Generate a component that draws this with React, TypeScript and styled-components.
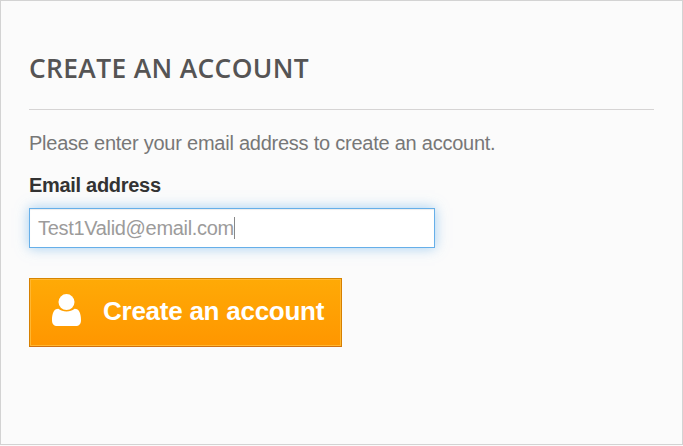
import React from "react";
import { createGlobalStyle, styled } from "styled-components";

const GlobalStyle = createGlobalStyle`
  *, *::before, *::after { box-sizing: border-box; }
  body { margin: 0; background: #fbfbfb; font-family: "Liberation Sans", Arial, sans-serif; }
`;

const Panel = styled.form`
  width: 683px;
  height: 445px;
  padding: 49px 28px 0;
  background: #fbfbfb;
  border: 1px solid #d3d3d3;
`;

const Heading = styled.h3`
  margin: 0 0 23px;
  height: 60px;
  border-bottom: 1px solid #d6d4d4;
  color: #555454;
  font: 600 26.4px/36px "Open Sans", sans-serif;
  letter-spacing: 0.35px;
  white-space: nowrap;
`;

const Intro = styled.p`
  margin: 0;
  color: #777;
  font-size: 20px;
  line-height: 20px;
  letter-spacing: -0.24px;
  white-space: nowrap;
`;

const Label = styled.label`
  display: block;
  margin-top: 22px;
  color: #333;
  font-size: 20px;
  font-weight: bold;
  line-height: 20px;
  letter-spacing: -0.3px;
`;

const Field = styled.div`
  display: flex;
  align-items: center;
  width: 406px;
  height: 40px;
  margin-top: 13px;
  padding-left: 8px;
  background: #fff;
  border: 1px solid #66afe9;
  box-shadow: inset 0 1px 1px rgba(0, 0, 0, 0.075), 0 0 12px rgba(102, 175, 233, 0.6);
  color: #9c9b9b;
  font-size: 20px;
  letter-spacing: -0.32px;
`;

const Caret = styled.span`
  width: 1px;
  height: 22px;
  background: #888;
`;

const Submit = styled.button`
  display: flex;
  align-items: center;
  width: 313px;
  height: 69px;
  margin-top: 30px;
  padding: 0 0 4px 22px;
  gap: 22px;
  border: 1px solid;
  border-color: #d68500 #d68000 #d07010;
  background: linear-gradient(#ffaa06, #ff9600) padding-box;
  box-shadow: inset 0 0 0 1px #ffb732;
  color: #fff;
  font: bold 26px/30px "Liberation Sans", Arial, sans-serif;
  letter-spacing: -0.25px;
  white-space: nowrap;
`;

const UserIcon = styled.svg`
  width: 29px;
  height: 32px;
  margin-bottom: 1px;
  flex: none;
`;

export default function App() {
  return (
    <>
      <GlobalStyle />
      <Panel>
        <Heading>CREATE AN ACCOUNT</Heading>
        <Intro>Please enter your email address to create an account.</Intro>
        <Label>Email address</Label>
        <Field>Test1Valid@email.com<Caret /></Field>
        <Submit type="button">
          <UserIcon viewBox="0 0 29 32" fill="currentColor">
            <circle cx="14.5" cy="8.1" r="8" />
            <path d="M6.4 14.7C8.8 16.5 11.3 17.5 14.5 17.5S20.200 16.500 22.600 14.700C27.200 14.700 29 19.500 29 26.200C29 29.800 27.100 32 23.700 32H5.300C1.900 32 0 29.800 0 26.200C0 19.500 1.800 14.700 6.400 14.700Z" />
          </UserIcon>
          <span>Create an account</span>
        </Submit>
      </Panel>
    </>
  );
}
